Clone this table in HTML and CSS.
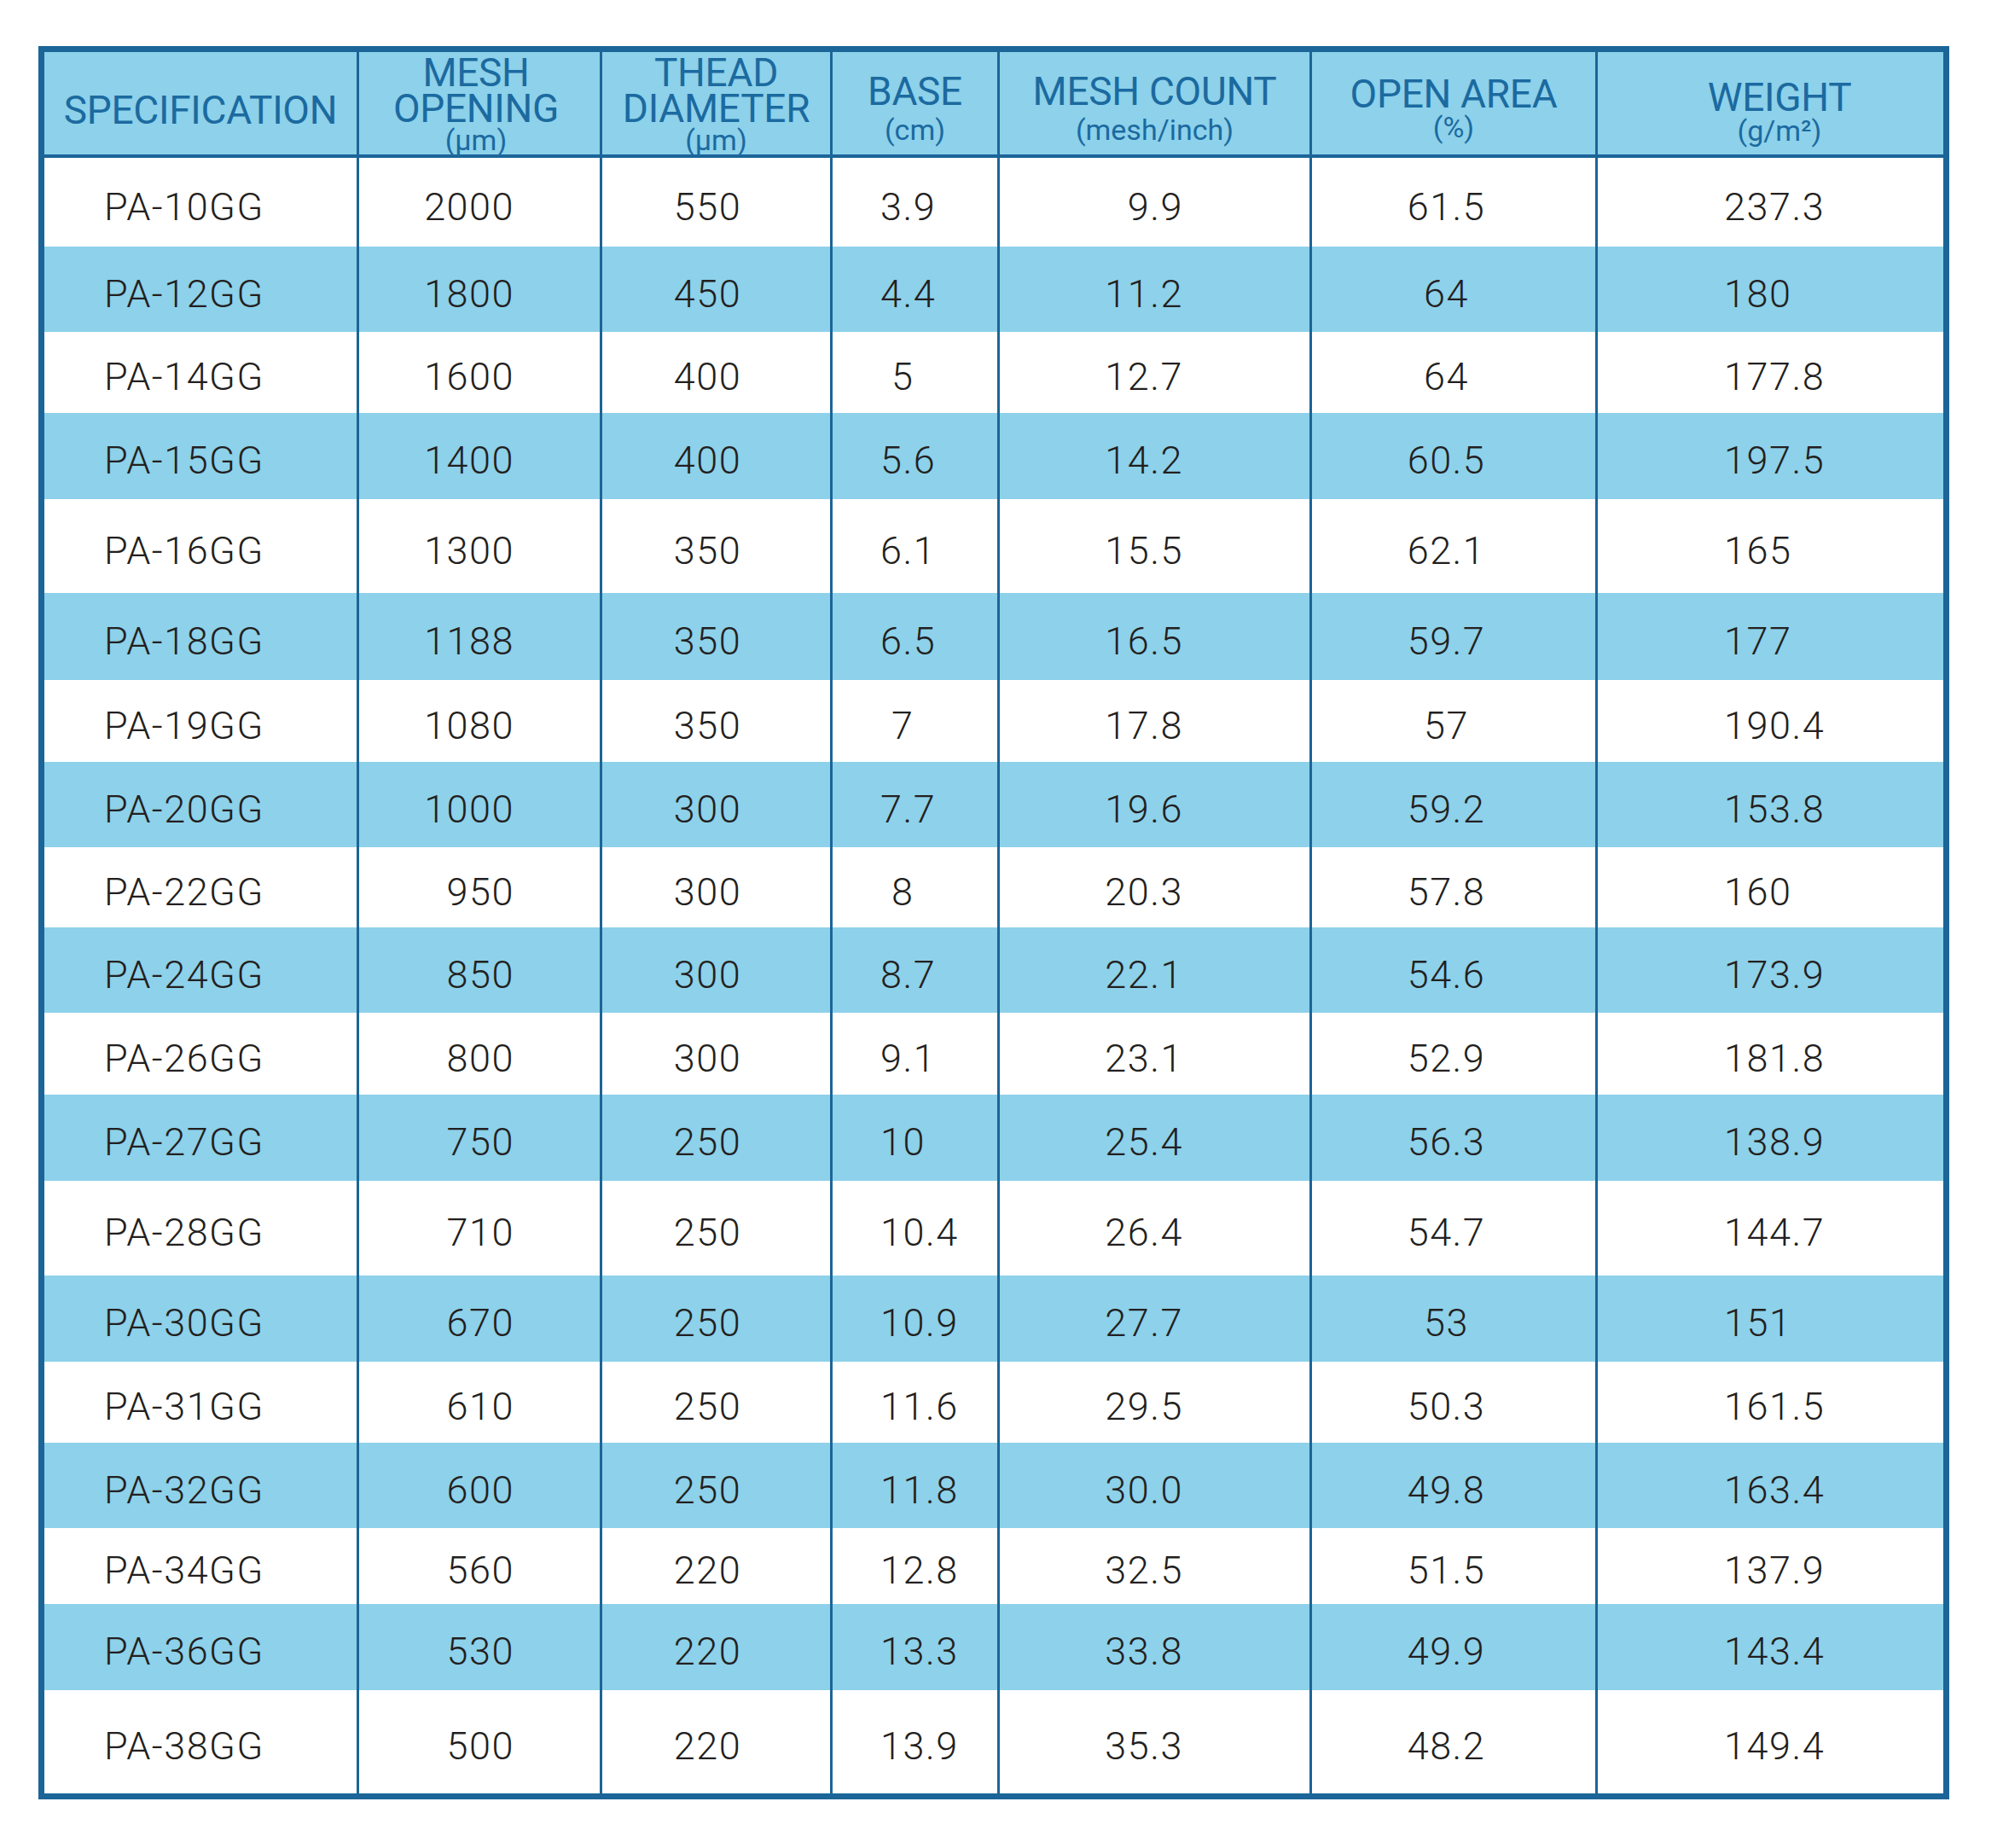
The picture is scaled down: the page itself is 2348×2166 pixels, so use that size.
FILE: index.html
```html
<!DOCTYPE html>
<html lang="en">
<head>
<meta charset="utf-8">
<title>PA Mesh Specification</title>
<link rel="stylesheet" href="styles.css">
</head>
<body>
<div class="spec-table">
  <div class="row head">
    <div class="c c1 h-spec"><span class="h">SPECIFICATION</span></div>
    <div class="c c2 h-three"><span class="h">MESH</span><span class="h">OPENING</span><span class="u">(μm)</span></div>
    <div class="c c3 h-three"><span class="h">THEAD</span><span class="h">DIAMETER</span><span class="u">(μm)</span></div>
    <div class="c c4 h-two"><span class="h">BASE</span><span class="u">(cm)</span></div>
    <div class="c c5 h-two"><span class="h">MESH COUNT</span><span class="u">(mesh/inch)</span></div>
    <div class="c c6 h-open"><span class="h">OPEN AREA</span><span class="u">(%)</span></div>
    <div class="c c7 h-weight"><span class="h">WEIGHT</span><span class="u">(g/m²)</span></div>
  </div>

  <div class="row"><div class="c c1">PA-10GG</div><div class="c c2">2000</div><div class="c c3">550</div><div class="c c4">3.9</div><div class="c c5">9.9</div><div class="c c6">61.5</div><div class="c c7">237.3</div></div>
  <div class="row alt"><div class="c c1">PA-12GG</div><div class="c c2">1800</div><div class="c c3">450</div><div class="c c4">4.4</div><div class="c c5">11.2</div><div class="c c6">64</div><div class="c c7">180</div></div>
  <div class="row"><div class="c c1">PA-14GG</div><div class="c c2">1600</div><div class="c c3">400</div><div class="c c4 i">5</div><div class="c c5">12.7</div><div class="c c6">64</div><div class="c c7">177.8</div></div>
  <div class="row alt"><div class="c c1">PA-15GG</div><div class="c c2">1400</div><div class="c c3">400</div><div class="c c4">5.6</div><div class="c c5">14.2</div><div class="c c6">60.5</div><div class="c c7">197.5</div></div>
  <div class="row"><div class="c c1">PA-16GG</div><div class="c c2">1300</div><div class="c c3">350</div><div class="c c4">6.1</div><div class="c c5">15.5</div><div class="c c6">62.1</div><div class="c c7">165</div></div>
  <div class="row alt"><div class="c c1">PA-18GG</div><div class="c c2">1188</div><div class="c c3">350</div><div class="c c4">6.5</div><div class="c c5">16.5</div><div class="c c6">59.7</div><div class="c c7">177</div></div>
  <div class="row"><div class="c c1">PA-19GG</div><div class="c c2">1080</div><div class="c c3">350</div><div class="c c4 i">7</div><div class="c c5">17.8</div><div class="c c6">57</div><div class="c c7">190.4</div></div>
  <div class="row alt"><div class="c c1">PA-20GG</div><div class="c c2">1000</div><div class="c c3">300</div><div class="c c4">7.7</div><div class="c c5">19.6</div><div class="c c6">59.2</div><div class="c c7">153.8</div></div>
  <div class="row"><div class="c c1">PA-22GG</div><div class="c c2">950</div><div class="c c3">300</div><div class="c c4 i">8</div><div class="c c5">20.3</div><div class="c c6">57.8</div><div class="c c7">160</div></div>
  <div class="row alt"><div class="c c1">PA-24GG</div><div class="c c2">850</div><div class="c c3">300</div><div class="c c4">8.7</div><div class="c c5">22.1</div><div class="c c6">54.6</div><div class="c c7">173.9</div></div>
  <div class="row"><div class="c c1">PA-26GG</div><div class="c c2">800</div><div class="c c3">300</div><div class="c c4">9.1</div><div class="c c5">23.1</div><div class="c c6">52.9</div><div class="c c7">181.8</div></div>
  <div class="row alt"><div class="c c1">PA-27GG</div><div class="c c2">750</div><div class="c c3">250</div><div class="c c4">10</div><div class="c c5">25.4</div><div class="c c6">56.3</div><div class="c c7">138.9</div></div>
  <div class="row"><div class="c c1">PA-28GG</div><div class="c c2">710</div><div class="c c3">250</div><div class="c c4">10.4</div><div class="c c5">26.4</div><div class="c c6">54.7</div><div class="c c7">144.7</div></div>
  <div class="row alt"><div class="c c1">PA-30GG</div><div class="c c2">670</div><div class="c c3">250</div><div class="c c4">10.9</div><div class="c c5">27.7</div><div class="c c6">53</div><div class="c c7">151</div></div>
  <div class="row"><div class="c c1">PA-31GG</div><div class="c c2">610</div><div class="c c3">250</div><div class="c c4">11.6</div><div class="c c5">29.5</div><div class="c c6">50.3</div><div class="c c7">161.5</div></div>
  <div class="row alt"><div class="c c1">PA-32GG</div><div class="c c2">600</div><div class="c c3">250</div><div class="c c4">11.8</div><div class="c c5">30.0</div><div class="c c6">49.8</div><div class="c c7">163.4</div></div>
  <div class="row"><div class="c c1">PA-34GG</div><div class="c c2">560</div><div class="c c3">220</div><div class="c c4">12.8</div><div class="c c5">32.5</div><div class="c c6">51.5</div><div class="c c7">137.9</div></div>
  <div class="row alt"><div class="c c1">PA-36GG</div><div class="c c2">530</div><div class="c c3">220</div><div class="c c4">13.3</div><div class="c c5">33.8</div><div class="c c6">49.9</div><div class="c c7">143.4</div></div>
  <div class="row"><div class="c c1">PA-38GG</div><div class="c c2">500</div><div class="c c3">220</div><div class="c c4">13.9</div><div class="c c5">35.3</div><div class="c c6">48.2</div><div class="c c7">149.4</div></div>
</div>
</body>
</html>
```

FILE: styles.css
```css
html, body {
  margin: 0;
  background: #ffffff;
}

body {
  padding: 54px 0 0 45px;
  font-family: Roboto, "Liberation Sans", Arial, sans-serif;
}

.spec-table {
  display: grid;
  width: max-content;
  grid-template-columns: 366px 282px 267px 193px 363px 332px 405px;
  grid-template-rows: 124px 104px 100px 95px 101px 110px 102px 96px 100px 94px 100px 96px 101px 111px 101px 95px 100px 89px 101px 121px;
  column-gap: 3px;
  border: 7px solid #1b6598;
  background: #1b6598;
}

.row {
  display: contents;
}

.c {
  display: flex;
  align-items: center;
  box-sizing: border-box;
  padding-top: 10px;
  background: #ffffff;
  color: #231f20;
  font-weight: 300;
  font-size: 45px;
  line-height: 45px;
  letter-spacing: 1.5px;
  white-space: nowrap;
}

.row.alt .c {
  background: #8dd1ea;
}

/* body column alignment */
.c1 { justify-content: flex-start; padding-left: 70px; }
.c2 { justify-content: flex-end; padding-right: 100px; }
.c3 { justify-content: center; padding-right: 20px; }
.c4 { justify-content: flex-start; padding-left: 56px; }
.c4.i { padding-left: 69px; }
.c5 { justify-content: flex-end; padding-right: 148px; }
.c6 { justify-content: center; padding-right: 17px; }
.c7 { justify-content: flex-start; padding-left: 148px; }

/* header */
.row.head .c {
  flex-direction: column;
  align-items: center;
  justify-content: flex-start;
  padding: 0;
  background: #8dd1ea;
  border-bottom: 4px solid #1b6598;
  color: #1b6aa0;
  font-weight: 400;
  letter-spacing: 0;
  overflow: visible;
}

.head .h {
  display: block;
  font-size: 46px;
  line-height: 42px;
  letter-spacing: -0.3px;
}

.head .u {
  display: block;
  font-size: 34px;
  line-height: 30px;
  margin-top: 3px;
}

.row.head .h-spec { padding-top: 47px; }
.row.head .h-three { padding-top: 3px; }
.row.head .h-three .u { margin-top: 1px; }
.row.head .h-two { padding-top: 25px; }
.row.head .h-two .u { margin-top: 9px; }
.row.head .h-open { padding-top: 28px; }
.row.head .h-weight { padding-top: 32px; }

.row.head .c2 { padding-right: 8px; }
.row.head .c7 { padding-left: 21px; }
```
